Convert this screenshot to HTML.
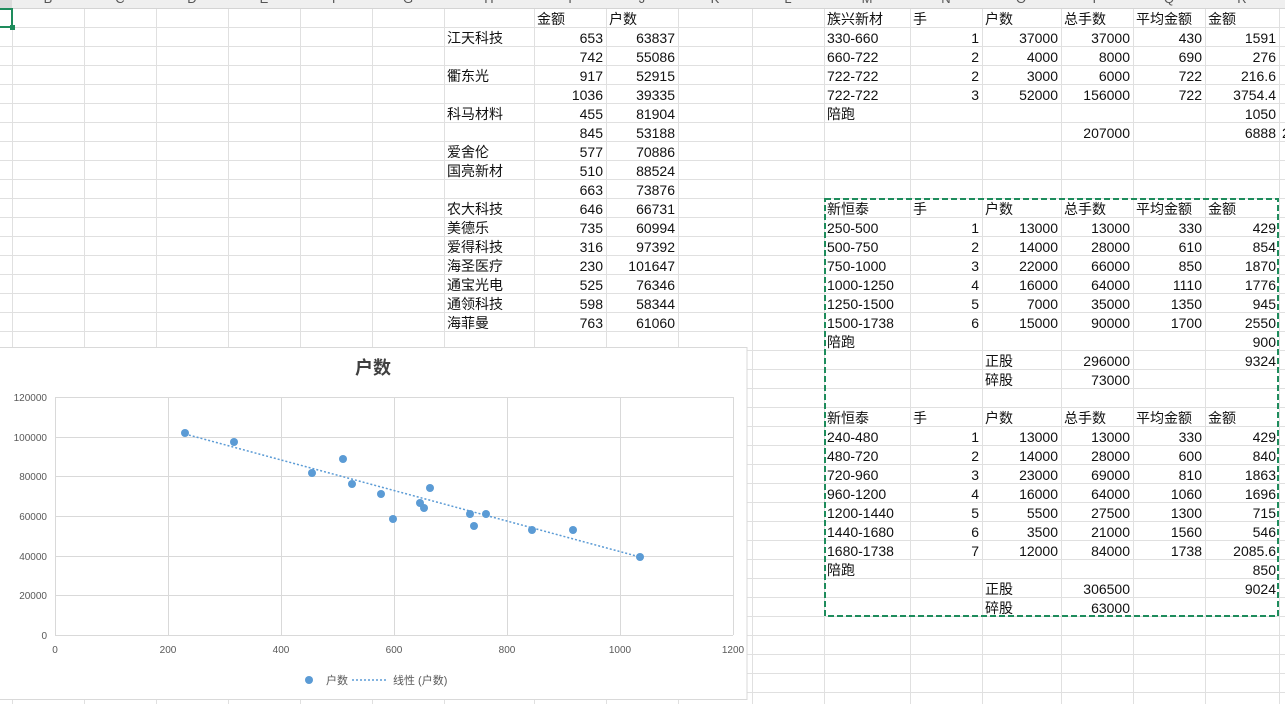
<!DOCTYPE html>
<html><head><meta charset="utf-8"><style>
*{margin:0;padding:0;box-sizing:border-box}
body{width:1285px;height:704px;overflow:hidden;background:#fff;position:relative;font-family:"Liberation Sans","Noto Sans CJK SC",sans-serif;font-size:14px;color:#111}
.hdr{position:absolute;left:0;top:0;width:1285px;height:9px;background:#efefef;border-bottom:1px solid #d4d4d4;overflow:hidden}
.hdr span{position:absolute;top:-9px;font-size:13px;color:#555;transform:translateX(-50%)}
.grid{position:absolute;left:0;top:9px;width:1285px;height:695px;background:repeating-linear-gradient(to bottom,transparent 0,transparent 18px,#e0e0e0 18px,#e0e0e0 19px)}
.v{position:absolute;top:0;width:1px;height:704px;background:#e0e0e0}
.r{position:absolute;left:0;width:1285px;height:19px}
.r span{position:absolute;top:1px;height:19px;line-height:19px;white-space:nowrap;padding:0 3px}
.H{left:444px;width:90px}
.I{left:534px;width:72px;text-align:right}
.J{left:606px;width:72px;text-align:right}
.M{left:824px;width:86px}
.N{left:910px;width:72px;text-align:right}
.O{left:982px;width:79px;text-align:right}
.P{left:1061px;width:72px;text-align:right}
.Q{left:1133px;width:72px;text-align:right}
.R{left:1205px;width:74px;text-align:right}
.l{text-align:left!important}
</style></head><body>
<div class="grid"></div>
<div class="v" style="left:12px"></div><div class="v" style="left:84px"></div><div class="v" style="left:156px"></div><div class="v" style="left:228px"></div><div class="v" style="left:300px"></div><div class="v" style="left:372px"></div><div class="v" style="left:444px"></div><div class="v" style="left:534px"></div><div class="v" style="left:606px"></div><div class="v" style="left:678px"></div><div class="v" style="left:752px"></div><div class="v" style="left:824px"></div><div class="v" style="left:910px"></div><div class="v" style="left:982px"></div><div class="v" style="left:1061px"></div><div class="v" style="left:1133px"></div><div class="v" style="left:1205px"></div><div class="v" style="left:1279px"></div>
<div class="hdr"><span style="left:48px">B</span><span style="left:120px">C</span><span style="left:192px">D</span><span style="left:264px">E</span><span style="left:336px">F</span><span style="left:408px">G</span><span style="left:489px">H</span><span style="left:570px">I</span><span style="left:642px">J</span><span style="left:715px">K</span><span style="left:788px">L</span><span style="left:867px">M</span><span style="left:946px">N</span><span style="left:1021px">O</span><span style="left:1097px">P</span><span style="left:1169px">Q</span><span style="left:1242px">R</span></div>
<div style="position:absolute;left:0;top:0;width:12px;height:9px;background:#dcdcdc"></div>
<div style="position:absolute;left:-2px;top:8px;width:15px;height:20px;border:2px solid #1e8c5c"></div>
<div style="position:absolute;left:10px;top:25px;width:5px;height:5px;background:#1e8c5c"></div>

<div class="r" style="top:9px"><span class="I l">金额</span><span class="J l">户数</span><span class="M">族兴新材</span><span class="N l">手</span><span class="O l">户数</span><span class="P l">总手数</span><span class="Q l">平均金额</span><span class="R l">金额</span></div>
<div class="r" style="top:28px"><span class="H">江天科技</span><span class="I">653</span><span class="J">63837</span><span class="M">330-660</span><span class="N">1</span><span class="O">37000</span><span class="P">37000</span><span class="Q">430</span><span class="R">1591</span></div>
<div class="r" style="top:47px"><span class="I">742</span><span class="J">55086</span><span class="M">660-722</span><span class="N">2</span><span class="O">4000</span><span class="P">8000</span><span class="Q">690</span><span class="R">276</span></div>
<div class="r" style="top:66px"><span class="H">衢东光</span><span class="I">917</span><span class="J">52915</span><span class="M">722-722</span><span class="N">2</span><span class="O">3000</span><span class="P">6000</span><span class="Q">722</span><span class="R">216.6</span></div>
<div class="r" style="top:85px"><span class="I">1036</span><span class="J">39335</span><span class="M">722-722</span><span class="N">3</span><span class="O">52000</span><span class="P">156000</span><span class="Q">722</span><span class="R">3754.4</span></div>
<div class="r" style="top:104px"><span class="H">科马材料</span><span class="I">455</span><span class="J">81904</span><span class="M">陪跑</span><span class="R">1050</span></div>
<div class="r" style="top:123px"><span class="I">845</span><span class="J">53188</span><span class="P">207000</span><span class="R">6888</span><span style="left:1279px">2</span></div>
<div class="r" style="top:142px"><span class="H">爱舍伦</span><span class="I">577</span><span class="J">70886</span></div>
<div class="r" style="top:161px"><span class="H">国亮新材</span><span class="I">510</span><span class="J">88524</span></div>
<div class="r" style="top:180px"><span class="I">663</span><span class="J">73876</span></div>
<div class="r" style="top:199px"><span class="H">农大科技</span><span class="I">646</span><span class="J">66731</span><span class="M">新恒泰</span><span class="N l">手</span><span class="O l">户数</span><span class="P l">总手数</span><span class="Q l">平均金额</span><span class="R l">金额</span></div>
<div class="r" style="top:218px"><span class="H">美德乐</span><span class="I">735</span><span class="J">60994</span><span class="M">250-500</span><span class="N">1</span><span class="O">13000</span><span class="P">13000</span><span class="Q">330</span><span class="R">429</span></div>
<div class="r" style="top:237px"><span class="H">爱得科技</span><span class="I">316</span><span class="J">97392</span><span class="M">500-750</span><span class="N">2</span><span class="O">14000</span><span class="P">28000</span><span class="Q">610</span><span class="R">854</span></div>
<div class="r" style="top:256px"><span class="H">海圣医疗</span><span class="I">230</span><span class="J">101647</span><span class="M">750-1000</span><span class="N">3</span><span class="O">22000</span><span class="P">66000</span><span class="Q">850</span><span class="R">1870</span></div>
<div class="r" style="top:275px"><span class="H">通宝光电</span><span class="I">525</span><span class="J">76346</span><span class="M">1000-1250</span><span class="N">4</span><span class="O">16000</span><span class="P">64000</span><span class="Q">1110</span><span class="R">1776</span></div>
<div class="r" style="top:294px"><span class="H">通领科技</span><span class="I">598</span><span class="J">58344</span><span class="M">1250-1500</span><span class="N">5</span><span class="O">7000</span><span class="P">35000</span><span class="Q">1350</span><span class="R">945</span></div>
<div class="r" style="top:313px"><span class="H">海菲曼</span><span class="I">763</span><span class="J">61060</span><span class="M">1500-1738</span><span class="N">6</span><span class="O">15000</span><span class="P">90000</span><span class="Q">1700</span><span class="R">2550</span></div>
<div class="r" style="top:332px"><span class="M">陪跑</span><span class="R">900</span></div>
<div class="r" style="top:351px"><span class="O l">正股</span><span class="P">296000</span><span class="R">9324</span></div>
<div class="r" style="top:370px"><span class="O l">碎股</span><span class="P">73000</span></div>
<div class="r" style="top:408px"><span class="M">新恒泰</span><span class="N l">手</span><span class="O l">户数</span><span class="P l">总手数</span><span class="Q l">平均金额</span><span class="R l">金额</span></div>
<div class="r" style="top:427px"><span class="M">240-480</span><span class="N">1</span><span class="O">13000</span><span class="P">13000</span><span class="Q">330</span><span class="R">429</span></div>
<div class="r" style="top:446px"><span class="M">480-720</span><span class="N">2</span><span class="O">14000</span><span class="P">28000</span><span class="Q">600</span><span class="R">840</span></div>
<div class="r" style="top:465px"><span class="M">720-960</span><span class="N">3</span><span class="O">23000</span><span class="P">69000</span><span class="Q">810</span><span class="R">1863</span></div>
<div class="r" style="top:484px"><span class="M">960-1200</span><span class="N">4</span><span class="O">16000</span><span class="P">64000</span><span class="Q">1060</span><span class="R">1696</span></div>
<div class="r" style="top:503px"><span class="M">1200-1440</span><span class="N">5</span><span class="O">5500</span><span class="P">27500</span><span class="Q">1300</span><span class="R">715</span></div>
<div class="r" style="top:522px"><span class="M">1440-1680</span><span class="N">6</span><span class="O">3500</span><span class="P">21000</span><span class="Q">1560</span><span class="R">546</span></div>
<div class="r" style="top:541px"><span class="M">1680-1738</span><span class="N">7</span><span class="O">12000</span><span class="P">84000</span><span class="Q">1738</span><span class="R">2085.6</span></div>
<div class="r" style="top:560px"><span class="M">陪跑</span><span class="R">850</span></div>
<div class="r" style="top:579px"><span class="O l">正股</span><span class="P">306500</span><span class="R">9024</span></div>
<div class="r" style="top:598px"><span class="O l">碎股</span><span class="P">63000</span></div>

<svg style="position:absolute;left:0;top:0" width="1285" height="704">
<rect x="825" y="199" width="453" height="417" fill="none" stroke="#1e8c5c" stroke-width="2" stroke-dasharray="6,3"/>
<rect x="-1" y="347.5" width="748" height="352" fill="#fff" stroke="#d9d9d9" stroke-width="1"/>
<g stroke="#d9d9d9" stroke-width="1">
<line x1="55.5" y1="397" x2="55.5" y2="635"/><line x1="168.5" y1="397" x2="168.5" y2="635"/><line x1="281.5" y1="397" x2="281.5" y2="635"/><line x1="394.5" y1="397" x2="394.5" y2="635"/><line x1="507.5" y1="397" x2="507.5" y2="635"/><line x1="620.5" y1="397" x2="620.5" y2="635"/><line x1="733.5" y1="397" x2="733.5" y2="635"/>
<line x1="55" y1="397.5" x2="733" y2="397.5"/><line x1="55" y1="437.5" x2="733" y2="437.5"/><line x1="55" y1="476.5" x2="733" y2="476.5"/><line x1="55" y1="516.5" x2="733" y2="516.5"/><line x1="55" y1="556.5" x2="733" y2="556.5"/><line x1="55" y1="595.5" x2="733" y2="595.5"/><line x1="55" y1="635.5" x2="733" y2="635.5"/>
</g>
<text x="373" y="374" text-anchor="middle" font-size="18" font-weight="bold" fill="#404040" font-family="Liberation Sans,Noto Sans CJK SC,sans-serif">户数</text>
<g font-size="10" fill="#595959" text-anchor="end" font-family="Liberation Sans,sans-serif">
<text x="47" y="401">120000</text><text x="47" y="441">100000</text><text x="47" y="480">80000</text><text x="47" y="520">60000</text><text x="47" y="560">40000</text><text x="47" y="599">20000</text><text x="47" y="639">0</text>
</g>
<g font-size="10" fill="#595959" text-anchor="middle" font-family="Liberation Sans,sans-serif">
<text x="55" y="653">0</text><text x="168" y="653">200</text><text x="281" y="653">400</text><text x="394" y="653">600</text><text x="507" y="653">800</text><text x="620" y="653">1000</text><text x="733" y="653">1200</text>
</g>
<line x1="185" y1="434" x2="640" y2="557" stroke="#5b9bd5" stroke-width="1.5" stroke-dasharray="2,2"/>
<g fill="#5b9bd5">
<circle cx="424" cy="508" r="4"/><circle cx="474" cy="526" r="4"/><circle cx="573" cy="530" r="4"/><circle cx="640" cy="557" r="4"/><circle cx="312" cy="473" r="4"/><circle cx="532" cy="530" r="4"/><circle cx="381" cy="494" r="4"/><circle cx="343" cy="459" r="4"/><circle cx="430" cy="488" r="4"/><circle cx="420" cy="503" r="4"/><circle cx="470" cy="514" r="4"/><circle cx="234" cy="442" r="4"/><circle cx="185" cy="433" r="4"/><circle cx="352" cy="484" r="4"/><circle cx="393" cy="519" r="4"/><circle cx="486" cy="514" r="4"/>
<circle cx="309" cy="680" r="4"/>
</g>
<line x1="352" y1="680" x2="386" y2="680" stroke="#5b9bd5" stroke-width="1.5" stroke-dasharray="2,2"/>
<g font-size="11" fill="#595959" font-family="Liberation Sans,Noto Sans CJK SC,sans-serif">
<text x="326" y="684">户数</text><text x="393" y="684">线性 (户数)</text>
</g>
</svg>
</body></html>
